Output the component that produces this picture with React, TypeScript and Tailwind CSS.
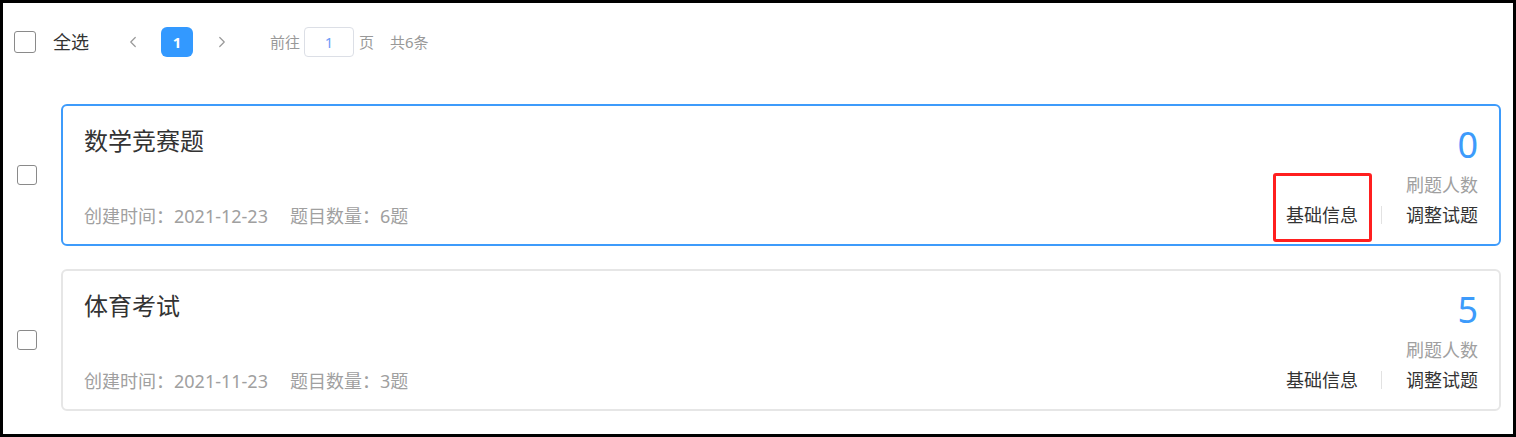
import React from "react";
import { ChevronLeft, ChevronRight } from "lucide-react";

interface IPaper {
  title: string;
  created: string;
  count: number;
  users: number;
  active?: boolean;
}

const papers: IPaper[] = [
  { title: "数学竞赛题", created: "2021-12-23", count: 6, users: 0, active: true },
  { title: "体育考试", created: "2021-11-23", count: 3, users: 5 },
];

const Box = ({ size }: { size: string }) => (
  <div className={`${size} shrink-0 rounded-[3px] border-[1.5px] border-[#8a8a8a] bg-white`} />
);

const PaperCard: React.FC<{ paper: IPaper }> = ({ paper }) => {
  return (
    <div className="flex items-center">
      <div className="pl-[14px]">
        <Box size="w-[20px] h-[20px]" />
      </div>
      <div
        className={`ml-[24px] mr-[12px] flex h-[142px] flex-1 justify-between rounded-[6px] border-2 bg-white px-[21px] ${
          paper.active ? "border-[#3d9bfb]" : "border-[#e6e6e6]"
        }`}
      >
        <div className="flex flex-col justify-between pt-[19px] pb-[16px]">
          <div className="text-[24px] leading-[32px] text-[#333]">{paper.title}</div>
          <div className="flex text-[18px] leading-[24px] text-[#a0a0a0]">
            <span>创建时间：{paper.created}</span>
            <span className="ml-[22px]">题目数量：{paper.count}题</span>
          </div>
        </div>
        <div className="flex flex-col items-end pt-[21px] pb-[16px]">
          <div className="text-[36px] leading-[36px] text-[#3d9bfb]">{paper.users}</div>
          <div className="mt-[10px] text-[18px] leading-[24px] text-[#a0a0a0]">刷题人数</div>
          <div className="mt-[6px] flex items-center text-[18px] leading-[24px] text-[#333]">
            <span className="relative">
              基础信息
              {paper.active && (
                <span className="absolute top-[-30px] bottom-[-15px] left-[-13px] right-[-14px] rounded-[3px] border-[3px] border-[#ff1f1f]" />
              )}
            </span>
            <span className="ml-[23px] mr-[24px] h-[18px] w-px bg-[#e2e2e2]" />
            <span>调整试题</span>
          </div>
        </div>
      </div>
    </div>
  );
};

export default function App() {
  return (
    <div className="box-border h-[437px] w-full border-[3px] border-black bg-white font-['Noto_Sans','Noto_Sans_CJK_SC',sans-serif]">
      <div className="flex h-[30px] items-center pl-[11px] mt-[24px]">
        <Box size="w-[22px] h-[22px]" />
        <span className="ml-[17px] text-[18px] text-[#333]">全选</span>
        <span className="ml-[29px] flex w-[30px] justify-center text-[#999]">
          <ChevronLeft size={18} strokeWidth={1.6} />
        </span>
        <span className="ml-[13px] flex h-[30px] w-[32px] items-center justify-center rounded-[6px] bg-[#3399ff] text-[15px] font-bold text-white">
          1
        </span>
        <span className="ml-[14px] flex w-[30px] justify-center text-[#999]">
          <ChevronRight size={18} strokeWidth={1.6} />
        </span>
        <span className="ml-[33px] text-[15px] text-[#999]">前往</span>
        <span className="ml-[4px] flex h-[30px] w-[50px] items-center justify-center rounded-[4px] border border-[#dcdfe6] text-[15px] text-[#6f9cf7]">
          1
        </span>
        <span className="ml-[5px] text-[15px] text-[#999]">页</span>
        <span className="ml-[16px] text-[15px] text-[#999]">共6条</span>
      </div>
      <div className="mt-[47px] flex flex-col gap-[23px]">
        {papers.map((p) => (
          <PaperCard key={p.title} paper={p} />
        ))}
      </div>
    </div>
  );
}
